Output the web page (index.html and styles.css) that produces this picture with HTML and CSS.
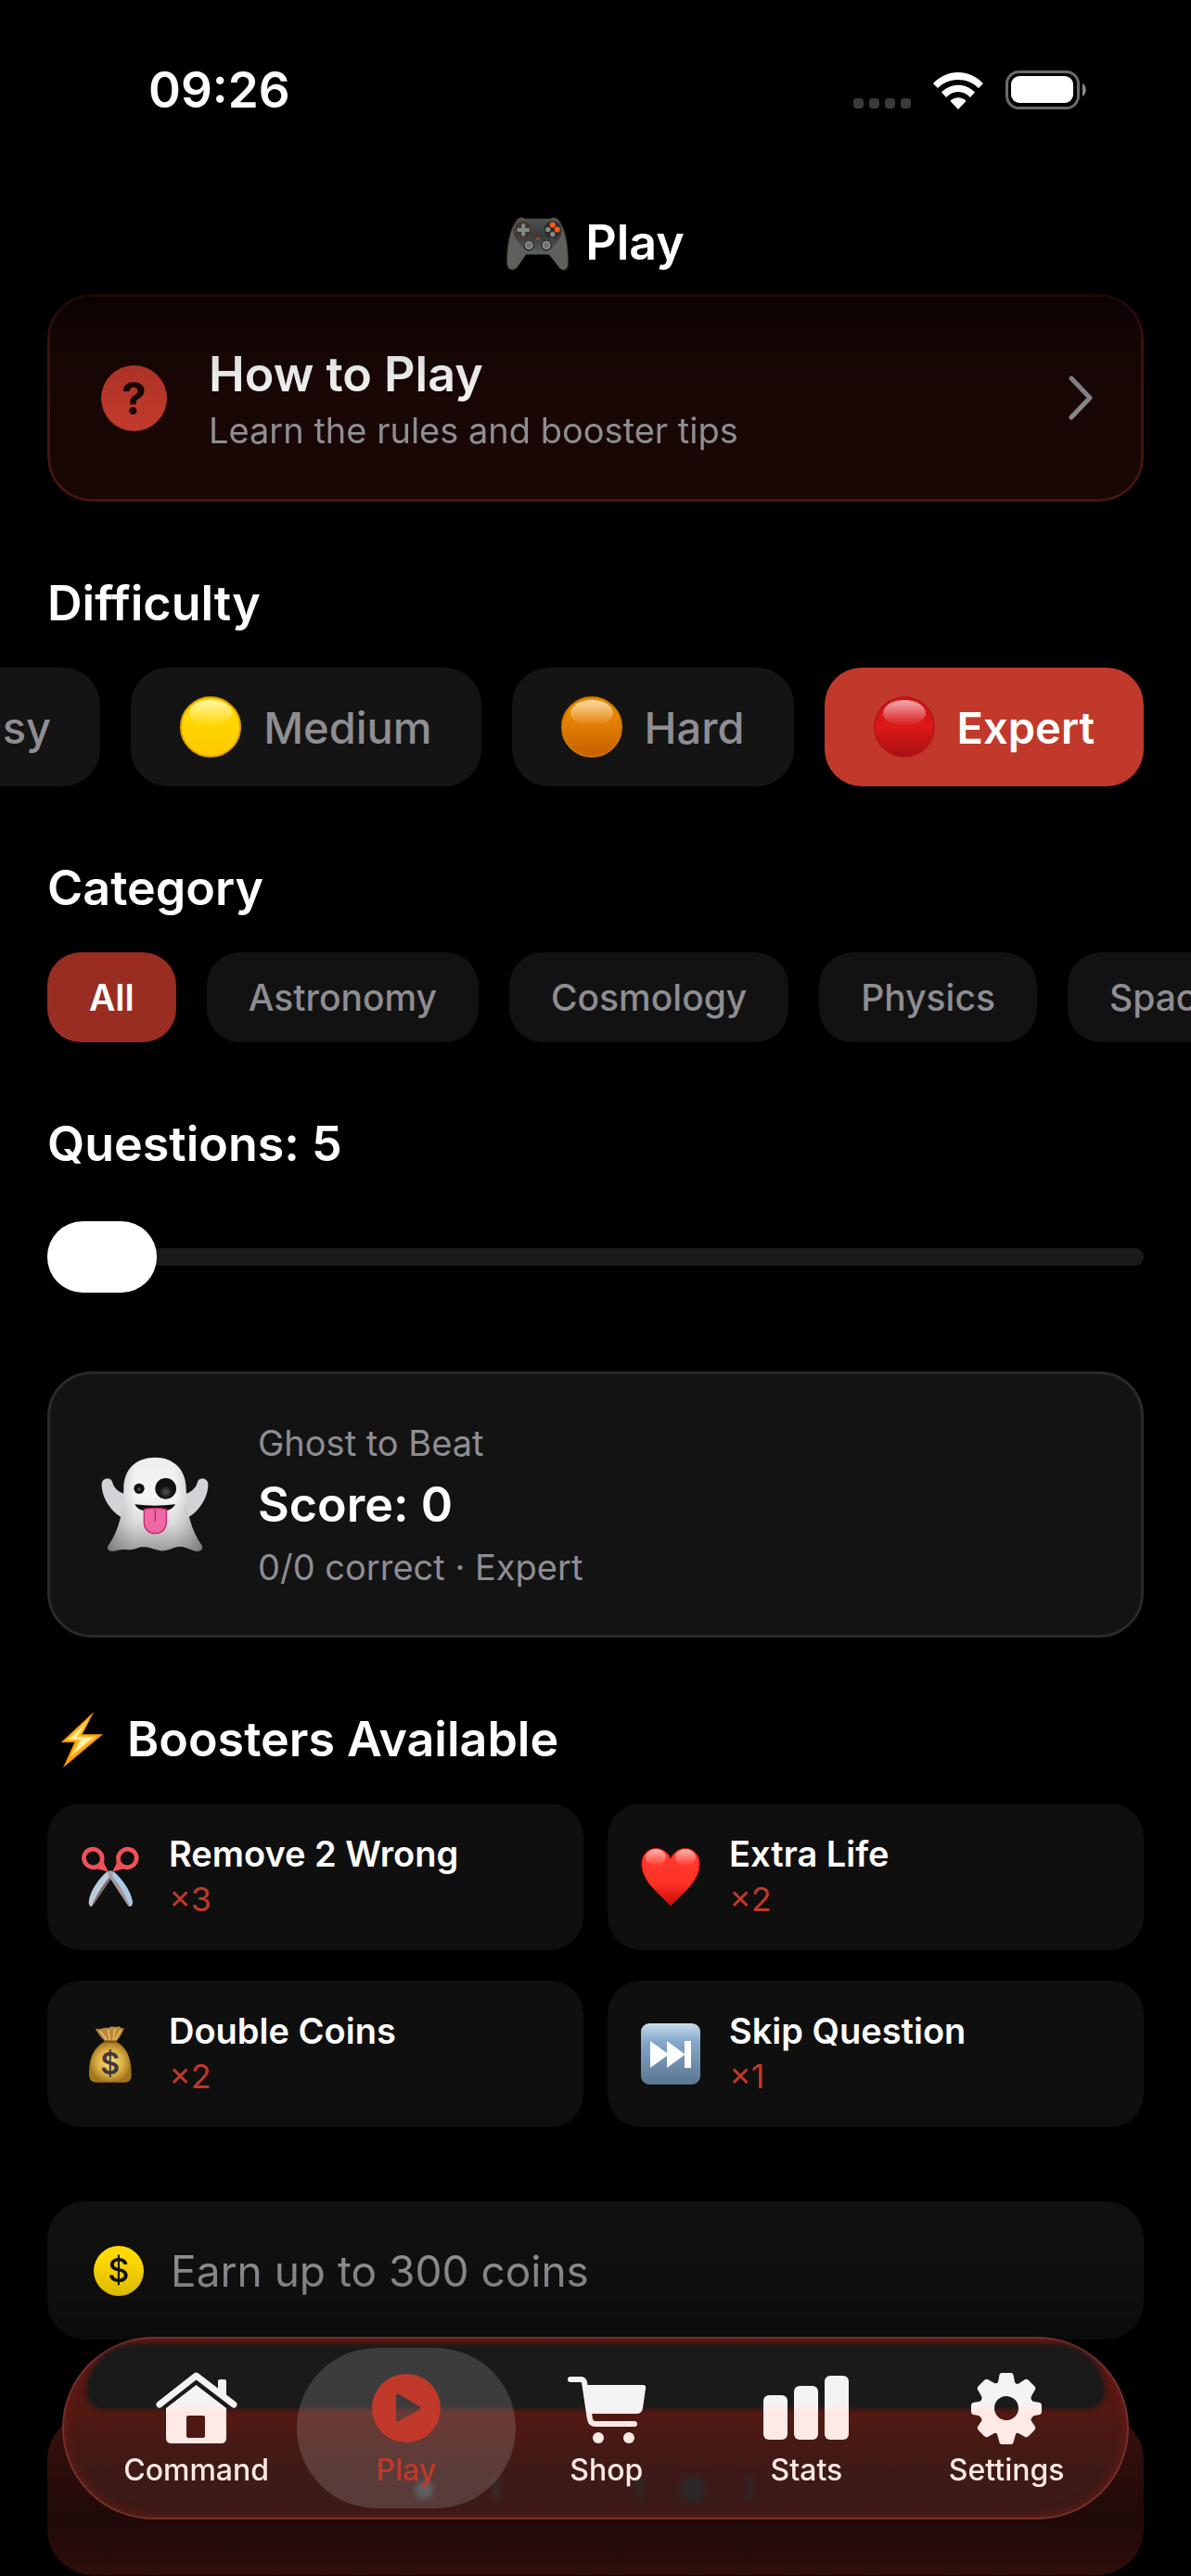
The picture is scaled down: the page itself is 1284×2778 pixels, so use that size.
FILE: index.html
```html
<!DOCTYPE html>
<html lang="en">
<head>
    <meta charset="UTF-8">
    <meta name="viewport" content="width=device-width, initial-scale=1.0">
    <title>Play</title>
    <link rel="stylesheet" href="styles.css">
</head>
<body>
    <!-- Shared gradients -->
    <svg class="defs" width="0" height="0" aria-hidden="true">
        <defs>
            <linearGradient id="tabFill" gradientUnits="userSpaceOnUse" x1="0" y1="34" x2="0" y2="44">
                <stop offset="0" stop-color="#f3f3f3"/><stop offset="1" stop-color="#ffe9e5"/>
            </linearGradient>
            <linearGradient id="yellow" x1="0" y1="0" x2="0" y2="1">
                <stop offset="0" stop-color="#ffe100"/><stop offset="1" stop-color="#ffc800"/>
            </linearGradient>
            <linearGradient id="orange" x1="0" y1="0" x2="0" y2="1">
                <stop offset="0" stop-color="#f59500"/><stop offset="1" stop-color="#c85f00"/>
            </linearGradient>
            <linearGradient id="red" x1="0" y1="0" x2="0" y2="1">
                <stop offset="0" stop-color="#d81016"/><stop offset="0.5" stop-color="#dc1818"/><stop offset="1" stop-color="#a81012"/>
            </linearGradient>
            <linearGradient id="green" x1="0" y1="0" x2="0" y2="1">
                <stop offset="0" stop-color="#4cd000"/><stop offset="1" stop-color="#2a9000"/>
            </linearGradient>
            <linearGradient id="shine" x1="0" y1="0" x2="0" y2="1">
                <stop offset="0" stop-color="#fff" stop-opacity="0.65"/><stop offset="1" stop-color="#fff" stop-opacity="0"/>
            </linearGradient>
        </defs>
    </svg>

    <header>
        <div class="status-bar">
            <span class="time">09:26</span>
            <div class="status-icons">
                <svg width="62" height="12" viewBox="0 0 62 12" fill="#3a3a3a">
                    <rect width="11" height="11" rx="4"/><rect x="17" width="11" height="11" rx="4"/>
                    <rect x="34" width="11" height="11" rx="4"/><rect x="51" width="11" height="11" rx="4"/>
                </svg>
                <svg class="wifi" width="54" height="40" viewBox="0 0 54 40" fill="#fff">
                    <path d="M0 12 C15 -4 39 -4 54 12 L49 17 C37 5 17 5 5 17Z"/>
                    <path d="M9 21.500 C19 11 35 11 45 21.500 L40 27 C33 19 21 19 14 27Z"/>
                    <path d="M18.500 31 C23 26 31 26 35.500 31 L27 40Z"/>
                </svg>
                <svg width="87" height="42" viewBox="0 0 87 42">
                    <rect x="1.500" y="1.500" width="77" height="39" rx="13" fill="none" stroke="#6b6b6b" stroke-width="3"/>
                    <rect x="6" y="6" width="67" height="29" rx="9" fill="#fff"/>
                    <path d="M83 14 C88 17 88 25 83 28Z" fill="#8a8a8a"/>
                </svg>
            </div>
        </div>
        <h1 class="title">
            <svg width="67" height="59" viewBox="38 36 202 176" aria-hidden="true">
                <defs>
                    <linearGradient id="pad" x1="0" y1="0" x2="0" y2="1"><stop offset="0" stop-color="#4d5251"/><stop offset="0.500" stop-color="#363a39"/><stop offset="1" stop-color="#5b5c57"/></linearGradient>
                </defs>
                <path d="M76 44 Q88 36 100 44 H178 Q192 36 204 44 C228 70 240 130 238 195 C236 214 216 216 206 198 L176 160 H102 L74 200 C62 216 42 212 40 192 C38 130 50 70 76 44Z" fill="#5f605b" stroke="#30312e" stroke-width="3"/>
                <path d="M84 46 H194 C216 52 226 80 212 106 C200 124 184 150 164 152 H116 C96 150 78 124 66 106 C52 80 62 52 84 46Z" fill="url(#pad)"/>
                <circle cx="93" cy="80" r="28" fill="#363936" stroke="#74401f" stroke-width="3"/>
                <path d="M87 60 h12 v14 h14 v12 H99 v14 H87 V86 H73 V74 H87Z" fill="#858781"/>
                <circle cx="188" cy="79" r="27" fill="#292d2d"/>
                <circle cx="188" cy="64" r="9" fill="#ff5a10"/><circle cx="203" cy="79" r="9" fill="#ff5a10"/>
                <circle cx="173" cy="79" r="8" fill="#898b89"/><circle cx="188" cy="94" r="8" fill="#898b89"/>
                <circle cx="140" cy="108" r="6" fill="#9c441b"/>
                <circle cx="111" cy="131" r="17" fill="#252827"/><circle cx="168" cy="131" r="17" fill="#252827"/>
                <circle cx="111" cy="130" r="12" fill="#707572" stroke="#a5aaa7" stroke-width="3"/>
                <circle cx="168" cy="130" r="12" fill="#707572" stroke="#a5aaa7" stroke-width="3"/>
            </svg>
            Play
        </h1>
    </header>

    <main>
        <button class="how-to" type="button">
            <svg width="71" height="71" viewBox="0 0 71 71" aria-hidden="true">
                <circle cx="35.500" cy="35.500" r="35.500" fill="#c0392b"/>
                <text x="35.500" y="53" text-anchor="middle" class="mark">?</text>
            </svg>
            <span class="how-text">
                <span class="how-title">How to Play</span>
                <span class="small">Learn the rules and booster tips</span>
            </span>
            <svg width="26" height="48" viewBox="0 0 26 48" fill="none" stroke="#88888d" stroke-width="5" stroke-linecap="round" stroke-linejoin="round" aria-hidden="true">
                <path d="M3 3 L23 24 L3 45"/>
            </svg>
        </button>

        <section>
            <h2>Difficulty</h2>
            <div class="row row-end">
                <button class="level" type="button">
                    <svg class="dot" viewBox="0 0 66 66"><circle cx="33" cy="33" r="33" fill="url(#green)"/></svg>Easy
                </button>
                <button class="level" type="button">
                    <svg class="dot" viewBox="0 0 66 66"><circle cx="33" cy="33" r="32" fill="url(#yellow)" stroke="#e0a000" stroke-width="2"/><ellipse cx="33" cy="18" rx="23" ry="14" fill="url(#shine)"/></svg>Medium
                </button>
                <button class="level" type="button">
                    <svg class="dot" viewBox="0 0 66 66"><circle cx="33" cy="33" r="32" fill="url(#orange)" stroke="#d07800" stroke-width="2"/><ellipse cx="33" cy="18" rx="23" ry="14" fill="url(#shine)"/></svg>Hard
                </button>
                <button class="level level-active" type="button">
                    <svg class="dot" viewBox="0 0 66 66"><circle cx="33" cy="33" r="32" fill="url(#red)" stroke="#b81818" stroke-width="2"/><ellipse cx="33" cy="18" rx="23" ry="14" fill="url(#shine)"/></svg>Expert
                </button>
            </div>
        </section>

        <section>
            <h2>Category</h2>
            <div class="row">
                <button class="chip chip-active" type="button">All</button>
                <button class="chip" type="button">Astronomy</button>
                <button class="chip" type="button">Cosmology</button>
                <button class="chip" type="button">Physics</button>
                <button class="chip" type="button">Space</button>
            </div>
        </section>

        <section class="questions">
            <h2><label for="questions">Questions: 5</label></h2>
            <input type="range" id="questions" min="5" max="20" value="5">
        </section>

        <section class="ghost">
            <svg width="116" height="103" viewBox="55 64 348 309" aria-hidden="true">
                <defs>
                    <linearGradient id="ghostBody" x1="0" y1="0" x2="0" y2="1"><stop offset="0" stop-color="#eeeeef"/><stop offset="0.400" stop-color="#f6f6f9"/><stop offset="0.700" stop-color="#dcdcde"/><stop offset="1" stop-color="#999a9a"/></linearGradient>
                    <linearGradient id="ghostSide" x1="0" y1="0" x2="1" y2="0"><stop offset="0" stop-color="#555" stop-opacity="0.500"/><stop offset="0.300" stop-color="#888" stop-opacity="0"/><stop offset="0.700" stop-color="#888" stop-opacity="0"/><stop offset="1" stop-color="#555" stop-opacity="0.500"/></linearGradient>
                    <radialGradient id="eye"><stop offset="0" stop-color="#555"/><stop offset="1" stop-color="#111"/></radialGradient>
                </defs>
                <path d="M132 185 C112 178 96 165 92 148 C88 128 60 132 57 150 C55 190 85 245 128 262Z" fill="#d3d3d7"/>
                <path d="M328 185 C346 178 362 165 366 148 C370 128 398 132 401 150 C403 190 373 245 330 262Z" fill="#d3d3d7"/>
                <path d="M128 168 C128 100 172 66 230 66 C288 66 330 104 330 168 C330 240 345 300 382 353 C384 368 372 374 352 367 C330 356 310 350 290 359 C268 369 250 371 230 364 C210 357 190 352 170 360 C150 369 125 360 104 368 C84 373 70 364 78 352 C112 305 128 240 128 168Z" fill="url(#ghostBody)"/>
                <path d="M128 168 C128 100 172 66 230 66 C288 66 330 104 330 168 C330 240 345 300 382 353 C384 368 372 374 352 367 C330 356 310 350 290 359 C268 369 250 371 230 364 C210 357 190 352 170 360 C150 369 125 360 104 368 C84 373 70 364 78 352 C112 305 128 240 128 168Z" fill="url(#ghostSide)"/>
                <circle cx="178" cy="167" r="17" fill="#111"/><circle cx="178" cy="169" r="5" fill="#555"/>
                <circle cx="264" cy="167" r="34" fill="#111"/><circle cx="264" cy="178" r="21" fill="url(#eye)"/>
                <path d="M164 218 Q230 226 295 218 C286 236 264 242 230 242 C194 242 172 236 164 218Z" fill="#0c0c0c"/>
                <path d="M194 234 Q230 226 266 234 V276 C266 298 250 312 230 312 C210 312 194 298 194 276Z" fill="#ee6aa5" stroke="#c22667" stroke-width="4"/>
                <path d="M230 234 V274" stroke="#c22667" stroke-width="4"/>
            </svg>
            <div class="ghost-text">
                <span class="small">Ghost to Beat</span>
                <span class="score">Score: 0</span>
                <span class="small">0/0 correct · Expert</span>
            </div>
        </section>

        <section>
            <h2 class="with-icon">
                <svg width="46" height="60" viewBox="44 34 140 198" preserveAspectRatio="none" aria-hidden="true">
                    <path d="M152 37 L48 142 H92 L55 230 L182 115 H115Z" fill="#ffa410" stroke="#e58200" stroke-width="2"/>
                    <path d="M134 66 L70 133 H110 L80 190 L156 124 H100Z" fill="#fff3ad" stroke="#ffd23c" stroke-width="5"/>
                </svg>
                Boosters Available
            </h2>
            <div class="boosters">
                <div class="booster">
                    <svg width="64" height="66" viewBox="22 35 192 198" aria-hidden="true">
                        <path d="M108 116 C80 140 52 180 48 214 C48 226 54 234 60 228 L126 130Z" fill="#b9cddd"/>
                        <path d="M60 228 L126 130 L122 126 C96 156 74 190 56 230Z" fill="#80696b"/>
                        <path d="M128 116 C156 140 184 180 190 214 C190 226 184 234 176 228 L112 130Z" fill="#a9cbe6"/>
                        <path d="M176 228 L112 130 L118 124 C140 150 164 184 182 230Z" fill="#a89698"/>
                        <ellipse cx="62" cy="74" rx="30" ry="29" fill="none" stroke="#f2505b" stroke-width="14" transform="rotate(35 62 74)"/>
                        <ellipse cx="173" cy="74" rx="30" ry="29" fill="none" stroke="#f2505b" stroke-width="14" transform="rotate(-35 173 74)"/>
                        <path d="M92 72 Q98 96 112 118 Q92 112 72 108Z" fill="#f2505b"/>
                        <path d="M143 72 Q138 96 124 118 Q144 112 163 108Z" fill="#f2505b"/>
                        <circle cx="118" cy="123" r="9" fill="#9fa5ab"/>
                    </svg>
                    <div><h3>Remove 2 Wrong</h3><p>×3</p></div>
                </div>
                <div class="booster">
                    <svg width="64" height="66" viewBox="0 0 64 66" aria-hidden="true">
                        <defs><linearGradient id="heart" x1="0" y1="0" x2="0" y2="1"><stop offset="0" stop-color="#ff3a2f"/><stop offset="0.600" stop-color="#ff3328"/><stop offset="1" stop-color="#c90a05"/></linearGradient></defs>
                        <path d="M32 64 C24 54 1 40 1 19 C1 -1 26 -3 32 14 C38 -3 63 -1 63 19 C63 40 40 54 32 64Z" fill="url(#heart)" stroke="#e0180f" stroke-width="1"/>
                        <ellipse cx="16" cy="12" rx="11" ry="9" fill="url(#shine)"/><ellipse cx="48" cy="12" rx="11" ry="9" fill="url(#shine)"/>
                    </svg>
                    <div><h3>Extra Life</h3><p>×2</p></div>
                </div>
                <div class="booster">
                    <svg width="64" height="62" viewBox="23 610 192 186" aria-hidden="true">
                        <defs><radialGradient id="bag"><stop offset="0" stop-color="#f7dc73"/><stop offset="0.600" stop-color="#dcb247"/><stop offset="1" stop-color="#a5751c"/></radialGradient></defs>
                        <path d="M102 662 C84 646 78 634 70 620 C88 628 98 614 112 620 C124 608 134 620 146 614 C154 620 160 622 164 618 C156 640 148 650 138 662Z" fill="#b98a3a"/>
                        <path d="M86 628 L108 660 M112 622 L117 660 M134 620 L128 660 M152 626 L134 660" stroke="#ebc675" stroke-width="4"/>
                        <path d="M100 664 C66 680 50 716 50 766 C50 790 60 796 80 795 H158 C180 796 188 788 187 766 C186 716 172 680 138 664Z" fill="url(#bag)"/>
                        <path d="M100 663 H138" stroke="#7d5419" stroke-width="7" stroke-linecap="round"/>
                        <text x="118" y="769" text-anchor="middle" class="bag-mark">$</text>
                    </svg>
                    <div><h3>Double Coins</h3><p>×2</p></div>
                </div>
                <div class="booster">
                    <svg width="64" height="66" viewBox="0 0 64 66" aria-hidden="true">
                        <defs><linearGradient id="skip" x1="0" y1="0" x2="0" y2="1"><stop offset="0" stop-color="#c9dcea"/><stop offset="0.300" stop-color="#83a8ca"/><stop offset="1" stop-color="#5a7690"/></linearGradient></defs>
                        <rect width="64" height="66" rx="9" fill="url(#skip)"/>
                        <path d="M10 19 L28 32 V19 L47 33 V19 H54 V48 H47 V34 L28 48 V35 L10 48Z" fill="#fff"/>
                    </svg>
                    <div><h3>Skip Question</h3><p>×1</p></div>
                </div>
            </div>
        </section>

        <div class="earn">
            <svg width="54" height="54" viewBox="0 0 54 54" aria-hidden="true">
                <circle cx="27" cy="27" r="27" fill="#ffd900"/>
                <text x="27" y="39" text-anchor="middle" class="coin-mark">$</text>
            </svg>
            Earn up to 300 coins
        </div>

        <button class="start" type="button" aria-label="Start"></button>
    </main>

    <nav class="tabs">
        <!-- Button label showing through the glass -->
        <svg class="glass" width="380" height="40" viewBox="0 0 380 40" fill="#2c282a" aria-hidden="true">
            <circle cx="5" cy="21" r="10" fill="#45454a"/><rect x="79" y="8" width="8" height="22" fill="#3a2a2c"/>
            <rect x="234" y="6" width="6" height="26"/><circle cx="295" cy="20" r="14"/><rect x="353" y="6" width="6" height="26"/>
        </svg>
        <a class="tab" href="#">
            <svg width="92" height="78" viewBox="0 0 92 78">
                <g transform="translate(2)">
                    <path d="M4 35 L43.500 4 L84 35" fill="none" stroke="url(#tabFill)" stroke-width="7" stroke-linecap="round" stroke-linejoin="round"/>
                    <path d="M67 22 V10 Q67 8 69 8 H74 Q76 8 76 10 V29Z" fill="url(#tabFill)"/>
                    <path fill-rule="evenodd" d="M43.500 14 L76 39 V71 Q76 77 70 77 H17 Q11 77 11 71 V39Z M35 47 Q33 47 33 49 V69 Q33 71 35 71 H51 Q53 71 53 69 V49 Q53 47 51 47Z" fill="url(#tabFill)"/>
                </g>
            </svg>
            Command
        </a>
        <a class="tab tab-active" href="#">
            <svg width="92" height="78" viewBox="0 0 92 78">
                <path fill-rule="evenodd" d="M46 2 A37 37 0 1 1 46 76 A37 37 0 1 1 46 2Z M35 26 V52 Q35 55 38 53 L60 41 Q63 39 60 37 L38 24 Q35 23 35 26Z" fill="#c0392b"/>
            </svg>
            Play
        </a>
        <a class="tab" href="#">
            <svg width="92" height="78" viewBox="0 0 92 78">
                <g transform="translate(4 5)">
                    <path d="M3 3 H14 Q17 3 18 6 L24 46 Q25 51 30 51 H72" fill="none" stroke="url(#tabFill)" stroke-width="6" stroke-linecap="round" stroke-linejoin="round"/>
                    <path d="M18 9 H81 Q85 9 84 13 L81 34 Q80 40 74 40 H23Z" fill="url(#tabFill)"/>
                    <circle cx="33" cy="66" r="6" fill="#ffe9e5"/><circle cx="66" cy="66" r="6" fill="#ffe9e5"/>
                </g>
            </svg>
            Shop
        </a>
        <a class="tab" href="#">
            <svg width="92" height="78" viewBox="0 0 92 78" fill="url(#tabFill)">
                <rect x="0" y="25" width="26" height="48" rx="6"/><rect x="33" y="15" width="26" height="58" rx="6"/><rect x="66" y="4" width="26" height="69" rx="6"/>
            </svg>
            Stats
        </a>
        <a class="tab" href="#">
            <svg width="92" height="78" viewBox="0 0 92 78">
                <path fill="url(#tabFill)" fill-rule="evenodd" d="M41 1 H51 Q53 1 53.500 3 L55 11 Q56 13 58 13 L60 12 L66 8 Q68 7 70 9 L76 15 Q78 17 77 19 L73 26 Q72 28 73 30 Q74 32 76 32 L82 33 Q84 34 84 36 V43 Q84 45 82 46 L76 47 Q74 48 73 50 Q72 52 73 53 L77 59 Q78 61 76 63 L70 69 Q68 71 66 70 L59 66 Q57 65 56 67 L53.500 76 Q53 78 51 78 H41 Q39 78 38.500 76 L36 67 Q35 65 33 66 L26 70 Q24 71 22 69 L16 63 Q14 61 15 59 L19 53 Q20 52 19 50 Q18 48 16 47 L10 46 Q8 45 8 43 V36 Q8 34 10 33 L16 32 Q18 32 19 30 Q20 28 19 26 L15 19 Q14 17 16 15 L22 9 Q24 7 26 8 L33 12 Q35 13 37 11 L38.500 3 Q39 1 41 1Z M46 26 A13 13 0 1 0 46 52 A13 13 0 1 0 46 26Z"/>
            </svg>
            Settings
        </a>
    </nav>
</body>
</html>
```

FILE: styles.css
```css
* {
    box-sizing: border-box;
}

html {
    background: #000;
}

body {
    margin: 0;
    background: #000;
    color: #fff;
    font-family: Inter, "Liberation Sans", sans-serif;
    overflow-x: hidden;
}

button {
    border: none;
    margin: 0;
    font-family: inherit;
    cursor: pointer;
}

svg {
    flex-shrink: 0;
}

h1, h2, h3, p {
    margin: 0;
}

.defs {
    position: absolute;
}

/* Status bar */
.status-bar {
    display: flex;
    justify-content: space-between;
    align-items: center;
    padding: 65px 113px 0 160px;
    height: 129px;
}

.time {
    font-size: 53px;
    font-weight: 600;
    line-height: 64px;
}

.status-icons {
    display: flex;
    align-items: flex-end;
    gap: 24px;
}

.title {
    display: flex;
    justify-content: center;
    align-items: center;
    gap: 18px;
    margin-top: 103px;
    font-size: 52px;
    font-weight: 600;
    line-height: 60px;
}

main {
    display: flex;
    flex-direction: column;
    gap: 80px;
    padding: 25px 51px 0;
}

h2 {
    font-size: 52px;
    font-weight: 600;
    line-height: 60px;
    margin-bottom: 39px;
}

.small {
    font-size: 38px;
    line-height: 48px;
    color: #8e8e93;
}

/* How to play */
.how-to {
    display: flex;
    align-items: center;
    gap: 45px;
    height: 224px;
    padding: 0 52px 0 55px;
    border: 3px solid #46150f;
    border-radius: 48px;
    background: #190705;
    color: #fff;
    text-align: left;
    -webkit-mask-image: linear-gradient(rgba(0, 0, 0, 0.4), rgba(0, 0, 0, 0.85) 25%, #000 60%);
    mask-image: linear-gradient(rgba(0, 0, 0, 0.4), rgba(0, 0, 0, 0.85) 25%, #000 60%);
}

.how-text {
    display: flex;
    flex-direction: column;
    flex: 1;
    gap: 3px;
}

.how-title {
    font-size: 52px;
    font-weight: 600;
    line-height: 66px;
}

.mark {
    font-size: 48px;
    font-weight: 700;
    fill: #190705;
}

/* Difficulty and category */
.row {
    display: flex;
    gap: 33px;
    margin: 0 -51px;
    padding: 0 51px;
    overflow: hidden;
}

.row-end {
    justify-content: flex-end;
}

.level {
    display: flex;
    align-items: center;
    flex-shrink: 0;
    gap: 24px;
    height: 128px;
    padding: 0 53px;
    border-radius: 40px;
    background: #141414;
    color: #8e8e93;
    font-size: 47px;
    font-weight: 500;
}

.level-active {
    background: #c0392b;
    color: #fff;
    font-weight: 600;
}

.dot {
    width: 66px;
    height: 66px;
}

.chip {
    flex-shrink: 0;
    height: 97px;
    padding: 0 45px;
    border-radius: 36px;
    background: #121212;
    color: #8e8e93;
    font-size: 39px;
    font-weight: 500;
}

.chip-active {
    background: #992d22;
    color: #fff;
    font-weight: 600;
}

/* Slider */
.questions {
    padding-bottom: 5px;
}

.questions input {
    -webkit-appearance: none;
    appearance: none;
    display: block;
    width: 100%;
    height: 77px;
    margin: 53px 0 0;
    background: transparent;
}

.questions input::-webkit-slider-runnable-track {
    height: 19px;
    border-radius: 9px;
    background: #1a1a1a;
}

.questions input::-webkit-slider-thumb {
    -webkit-appearance: none;
    width: 118px;
    height: 77px;
    margin-top: -29px;
    border-radius: 38px;
    background: #fff;
}

/* Ghost card */
.ghost {
    display: flex;
    align-items: center;
    gap: 53px;
    height: 287px;
    padding: 0 55px;
    border: 3px solid #292929;
    border-radius: 48px;
    background: #131313;
}

.ghost-text {
    display: flex;
    flex-direction: column;
    gap: 13px;
}

.score {
    font-size: 52px;
    font-weight: 600;
    line-height: 60px;
}

/* Boosters */
.with-icon {
    display: flex;
    align-items: center;
    gap: 26px;
    padding-left: 14px;
}

.boosters {
    display: grid;
    grid-template-columns: 1fr 1fr;
    gap: 33px 26px;
}

.booster {
    display: flex;
    align-items: center;
    gap: 31px;
    height: 158px;
    padding: 0 36px;
    border-radius: 36px;
    background: #0f0f0f;
}

.booster h3 {
    font-size: 38px;
    font-weight: 600;
    line-height: 49px;
}

.booster p {
    color: #c0392b;
    font-size: 36px;
    line-height: 49px;
}

.bag-mark {
    font-size: 96px;
    font-weight: 600;
    fill: #40353a;
}

/* Coins and start */
.earn {
    display: flex;
    align-items: center;
    gap: 29px;
    height: 149px;
    padding: 0 50px;
    border-radius: 40px;
    background: #101010;
    color: #8e8e93;
    font-size: 46px;
    -webkit-mask-image: linear-gradient(#000 40%, rgba(0, 0, 0, 0.7));
    mask-image: linear-gradient(#000 40%, rgba(0, 0, 0, 0.7));
}

.coin-mark {
    font-size: 36px;
    font-weight: 500;
    fill: #111;
}

.start {
    height: 174px;
    border-radius: 50px;
    background: linear-gradient(#3a100b, #1f0a09 66%, #2e0e0a);
}

/* Tab bar */
.tabs {
    position: fixed;
    left: 67px;
    right: 67px;
    bottom: 61px;
    display: grid;
    grid-template-columns: 1.1fr 1fr 1fr 1fr 1fr;
    height: 197px;
    padding: 0 22px 0 24px;
    border: 2px solid #74302b;
    border-radius: 99px;
    background: linear-gradient(#4a1712, #531812 40%, #3d1a17 75%, #3a1a17);
    box-shadow: inset 0 0 12px #701c14;
}

.tabs::before {
    content: "";
    position: absolute;
    top: 6px;
    left: 24px;
    right: 24px;
    height: 70px;
    border-radius: 70px 70px 24px 24px;
    background: #1a1a1a;
    filter: blur(2px);
}

.glass {
    position: absolute;
    left: 50%;
    bottom: 11px;
    margin-left: -190px;
    filter: blur(3px);
    overflow: visible;
}

.tab {
    position: relative;
    z-index: 0;
    display: flex;
    flex-direction: column;
    align-items: center;
    gap: 8px;
    padding-top: 36px;
    color: #ffe9e5;
    font-size: 32px;
    font-weight: 500;
    line-height: 40px;
    text-decoration: none;
}

.tab-active {
    color: #c0392b;
}

.tab-active::before {
    content: "";
    position: absolute;
    z-index: -1;
    top: 10px;
    bottom: 10px;
    left: -10px;
    right: -10px;
    border-radius: 87px;
    background: rgba(255, 255, 255, 0.15);
}
```
